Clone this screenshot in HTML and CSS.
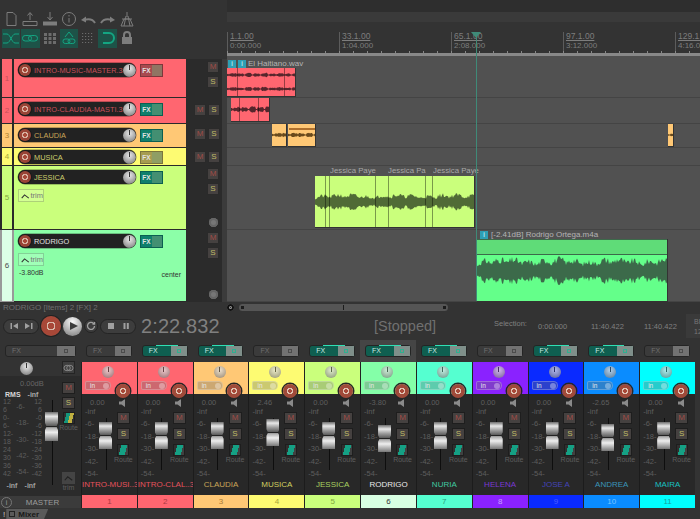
FILE: index.html
```html
<!DOCTYPE html>
<html lang="en">
  <head>
    <meta charset="UTF-8" />
    <title>Mixer session</title>
    <link rel="stylesheet" href="styles.css">
  </head>
  <body>
    <div class="app">
      <!-- toolbar + ruler -->
      <div class="top">
        <div class="toolbar">
          <div class="tool"><svg viewBox="0 0 18 18"><path d="M5 2.500h6l3 3v10H5z"/></svg></div>
          <div class="tool"><svg viewBox="0 0 18 18"><path d="M9 10V3M6.500 5.500L9 2.500l2.500 3M2 11.500h14v4H2z"/></svg></div>
          <div class="tool"><svg viewBox="0 0 18 18"><path d="M9 2v7M6.500 7L9 10l2.500-3"/><path class="fill" d="M2 11.500h14v4H2z"/></svg></div>
          <div class="tool"><svg viewBox="0 0 18 18"><circle cx="9" cy="9" r="6.500"/><path d="M9 8v4.500M9 5v1.500"/></svg></div>
          <div class="tool"><svg viewBox="0 0 18 18"><path class="thick" d="M16 13c-2-3.500-6-4.500-11-3"/><path class="fill" d="M2 10l5-3.500v6z"/></svg></div>
          <div class="tool"><svg viewBox="0 0 18 18"><path class="thick" d="M2 13c2-3.500 6-4.500 11-3"/><path class="fill" d="M16 10l-5-3.500v6z"/></svg></div>
          <div class="tool"><svg viewBox="0 0 18 18"><path d="M9 2v3M6 16l2-10h2l2 10M3 16l3-7h6l3 7zM4 9h10"/></svg></div>

          <div class="tool on"><svg viewBox="0 0 18 18"><path d="M1 5h4c3 0 5 9 8 9h4M1 14h4c3 0 5-9 8-9h4"/></svg></div>
          <div class="tool on"><svg viewBox="0 0 18 18"><rect x="1.500" y="6.500" width="9" height="5.500" rx="2.700"/><rect x="7.500" y="6.500" width="9" height="5.500" rx="2.700"/></svg></div>
          <div class="tool"><svg viewBox="0 0 18 18"><path class="blocks" d="M3 4h3v3H3zM7.500 4h3v3h-3zM12 4h3v3h-3zM3 8h3v3H3zM7.500 8h3v3h-3zM12 8h3v3h-3zM3 12h3v3H3zM7.500 12h3v3h-3zM12 12h3v3h-3z"/></svg></div>
          <div class="tool on"><svg viewBox="0 0 18 18"><path d="M5 8l4-5 4 5"/><rect x="3" y="10" width="7" height="4.500" rx="2.200"/><rect x="8" y="10" width="7" height="4.500" rx="2.200"/></svg></div>
          <div class="tool"><svg viewBox="0 0 18 18"><path class="dots" d="M3 4.500h12M3 7.500h12M3 10.500h12M3 13.500h12"/></svg></div>
          <div class="tool on"><svg viewBox="0 0 18 18"><path class="thick" d="M4 4h6a5 5 0 0 1 0 10H4"/></svg></div>
          <div class="tool"><svg viewBox="0 0 18 18"><path class="thick" d="M6 8V6a3 3 0 0 1 6 0v2"/><path class="fill" d="M4 8h10v7H4z"/></svg></div>
        </div>
        <div class="timeline">
          <div class="timeline-band"></div>
          <div class="ruler">
            <div class="mark"><u>1.1.00</u><span>0:00.000</span></div>
            <div class="mark"><u>33.1.00</u><span>1:04.000</span></div>
            <div class="mark"><u>65.1.00</u><span>2:08.000</span></div>
            <div class="mark"><u>97.1.00</u><span>3:12.000</span></div>
            <div class="mark"><u>129.1.00</u><span>4:16.000</span></div>
          </div>
          <div class="ticks"></div>
        </div>
      </div>

      <!-- tracks -->
      <div class="tracks">
        <div class="track t-1 first">
          <div class="num"><b>1</b></div>
          <div class="tcp">
            <div class="tcp-line">
              <div class="name-pill"><i class="rec"></i><span>INTRO-MUSIC-MASTER.3</span><i class="knob"></i></div>
              <div class="fx-mini off"><b>FX</b><i></i></div>
            </div>
          </div>
          <div class="ms stacked"><i class="m">M</i><i class="s">S</i></div>
          <div class="lane">
            <div class="take-label label-haitiano"><i class="badge">i</i><i class="badge">i</i><span>El Haitiano.wav</span></div>
            <div class="clip red clip-haitiano" data-cuts="10,57">
              <svg class="wave half" data-seed="3" data-amp="0.36" data-gaps="1"></svg>
              <svg class="wave half" data-seed="8" data-amp="0.36" data-gaps="1"></svg>
            </div>
          </div>
        </div>
        <div class="track t-2">
          <div class="num"><b>2</b></div>
          <div class="tcp">
            <div class="tcp-line">
              <div class="name-pill"><i class="rec"></i><span>INTRO-CLAUDIA-MASTI.3</span><i class="knob"></i></div>
              <div class="fx-mini"><b>FX</b><i></i></div>
            </div>
          </div>
          <div class="ms"><i class="m">M</i><i class="s">S</i></div>
          <div class="lane">
            <div class="clip red clip-claudia-a" data-cuts="8,27">
              <svg class="wave" data-seed="5" data-amp="0.3" data-gaps="1"></svg>
            </div>
          </div>
        </div>
        <div class="track t-3">
          <div class="num"><b>3</b></div>
          <div class="tcp">
            <div class="tcp-line">
              <div class="name-pill"><i class="rec"></i><span>CLAUDIA</span><i class="knob"></i></div>
              <div class="fx-mini"><b>FX</b><i></i></div>
            </div>
          </div>
          <div class="ms"><i class="m">M</i><i class="s">S</i></div>
          <div class="lane">
            <div class="clip orange clip-claudia-b"><svg class="wave" data-seed="11" data-amp="0.26" data-gaps="1"></svg></div>
            <div class="clip orange lined clip-claudia-c"><svg class="wave" data-seed="14" data-amp="0.26" data-gaps="1"></svg></div>
            <div class="clip orange clip-claudia-d"><svg class="wave" data-seed="17" data-amp="0.2" data-gaps="1"></svg></div>
          </div>
        </div>
        <div class="track t-4">
          <div class="num"><b>4</b></div>
          <div class="tcp">
            <div class="tcp-line">
              <div class="name-pill"><i class="rec"></i><span>MUSICA</span><i class="knob"></i></div>
              <div class="fx-mini off"><b>FX</b><i></i></div>
            </div>
          </div>
          <div class="ms"><i class="m">M</i><i class="s">S</i></div>
          <div class="lane"></div>
        </div>
        <div class="track t-5">
          <div class="num"><b>5</b></div>
          <div class="tcp">
            <div class="tcp-line">
              <div class="name-pill"><i class="rec"></i><span>JESSICA</span><i class="knob"></i></div>
              <div class="fx-mini"><b>FX</b><i></i></div>
            </div>
            <div class="trim"><svg viewBox="0 0 12 8"><path d="M1 7l4-4.500L11 7"/></svg>trim</div>
          </div>
          <div class="ms stacked"><i class="m">M</i><i class="s">S</i><em class="phase"></em></div>
          <div class="lane">
            <span class="take-name jp-a">Jessica Paye</span>
            <span class="take-name jp-b">Jessica Pa</span>
            <span class="take-name jp-c">Jessica Paye</span>
            <div class="clip lime clip-jessica" data-cuts="10,14,60,73,110,117">
              <svg class="wave tall" data-seed="21" data-amp="0.62"></svg>
            </div>
          </div>
        </div>
        <div class="track t-6">
          <div class="num"><b>6</b></div>
          <div class="tcp">
            <div class="tcp-line">
              <div class="name-pill"><i class="rec"></i><span>RODRIGO</span><i class="knob"></i></div>
              <div class="fx-mini"><b>FX</b><i></i></div>
            </div>
            <div class="trim"><svg viewBox="0 0 12 8"><path d="M1 7l4-4.500L11 7"/></svg>trim</div>
            <div class="tcp-foot"><span>-3.80dB</span><span>center</span></div>
          </div>
          <div class="ms stacked"><i class="m">M</i><i class="s">S</i><em class="phase"></em></div>
          <div class="lane">
            <div class="take-label label-rodrigo"><i class="badge">i</i><span>[-2.41dB] Rodrigo Ortega.m4a</span></div>
            <div class="clip mint clip-rodrigo">
              <div class="clip-band"></div>
              <svg class="wave full" data-seed="31" data-amp="0.95"></svg>
            </div>
          </div>
        </div>
      </div>

      <div class="playhead"></div>

      <!-- transport -->
      <div class="transport">
        <div class="status">
          <span class="status-text">RODRIGO [Items] 2 [FX] 2</span>
          <i class="scroll-dot"></i>
          <div class="hscroll"><i></i><i class="mid"></i><i></i></div>
        </div>
        <div class="controls">
          <div class="pill">
            <svg viewBox="0 0 10 10"><path d="M1.500 2h1.500v6H1.500zM9 2v6L4 5z"/></svg>
            <svg viewBox="0 0 10 10"><path d="M1 2v6l5-3zM7 2h1.500v6H7z"/></svg>
          </div>
          <div class="t-rec"></div>
          <div class="t-play"></div>
          <div class="t-loop"><svg viewBox="0 0 10 10"><path d="M8.500 5a3.500 3.500 0 1 1-1-2.500M8.500 1v2h-2"/></svg></div>
          <div class="pill">
            <svg viewBox="0 0 10 10"><path d="M2 2h6v6H2z"/></svg>
            <svg viewBox="0 0 10 10"><path d="M2.500 2h2v6h-2zM5.800 2h2v6h-2z"/></svg>
          </div>
          <div class="clock">2:22.832</div>
          <div class="state">[Stopped]</div>
          <div class="sel">
            <span>Selection:</span><span>0:00.000</span><span>11:40.422</span><span>11:40.422</span>
          </div>
          <div class="bpm"><span>BPM</span><span>120</span></div>
        </div>
      </div>

      <!-- mixer -->
      <div class="mixer">
        <div class="master">
          <div class="fx-slot off"><b>FX</b><i></i></div>
          <div class="master-head">
            <i class="knob big"></i>
            <div class="link-btn"><svg viewBox="0 0 12 8"><ellipse cx="4.500" cy="4" rx="3.500" ry="3"/><ellipse cx="7.500" cy="4" rx="3.500" ry="3"/></svg></div>
          </div>
          <div class="master-body">
            <div class="meter">
              <div class="meter-db">0.00dB</div>
              <div class="meter-top"><b>RMS</b><b class="dim">-inf</b></div>
              <div class="meter-scale">
                <div class="scale-col"><span>12</span><span>6</span><span>0-</span><span>6-</span><span>12-</span><span>18</span><span>24</span><span>30</span><span>36</span><span>42</span></div>
                <div class="scale-col mid"><span>-6-</span><span>-18-</span><span>-30-</span><span>-42-</span><span>-54-</span></div>
                <div class="scale-col"><span>12</span><span>6</span><span>-0</span><span>-6</span><span>-12</span><span>-18</span><span>-24</span><span>-30</span><span>-36</span><span>-42</span></div>
              </div>
              <div class="meter-foot"><b>-inf</b><b>-inf</b></div>
            </div>
            <div class="fader-col master-fader"><div class="fader"></div></div>
            <div class="btn-col">
              <i class="mbtn m">M</i>
              <i class="mbtn s">S</i>
              <i class="route r-master"></i>
              <span class="route-text">Route</span>
              <i class="trim-btn"><svg viewBox="0 0 12 8"><path d="M1 7l4-4.500L11 7"/></svg></i>
              <span class="route-text">trim</span>
            </div>
          </div>
          <div class="master-foot"><i class="info">i</i><span>MASTER</span></div>
        </div>
        <div class="strips" id="strips"></div>
      </div>

      <div class="tabs">
        <span class="bang">!</span>
        <div class="tab"><i></i>Mixer</div>
      </div>
    </div>
    <script src="script.js"></script>
  </body>
</html>
```

FILE: styles.css
```css
* {
  box-sizing: border-box;
}

body {
  margin: 0;
  background-color: #333333;
  font-family: "Liberation Sans", Arial, sans-serif;
  font-size: 8px;
  color: #888888;
}

i,
em {
  font-style: normal;
}

.app {
  position: relative;
  width: 700px;
  height: 519px;
  overflow: hidden;
  display: flex;
  flex-direction: column;
}

/* toolbar + ruler */
.top {
  display: flex;
  height: 56px;
  flex: none;
  background-color: #333333;
}

.toolbar {
  width: 227px;
  flex: none;
  padding: 9px 0 0 1.500px;
  display: grid;
  grid-template-columns: repeat(7, 19.400px);
  grid-auto-rows: 19.500px;
}

.tool {
  display: flex;
  align-items: center;
  justify-content: center;
  margin-right: 0.600px;
}

.tool svg {
  width: 18px;
  height: 18px;
  fill: none;
  stroke: #7d7d7d;
  stroke-width: 1;
}

.tool .fill {
  fill: #7d7d7d;
  stroke: none;
}

.tool .thick {
  stroke-width: 2;
}

.tool .blocks {
  fill: #6c6c6c;
  stroke: none;
}

.tool .dots {
  stroke: #6c6c6c;
  stroke-width: 1.200;
  stroke-dasharray: 1.200 1.800;
}

.tool.on {
  background-color: #1d5348;
}

.tool.on svg {
  stroke: #14a582;
}

.timeline {
  flex: 1;
  min-width: 0;
  overflow: hidden;
  display: flex;
  flex-direction: column;
  background: linear-gradient(#2e2e2e 12px, #333333 12px);
}

.timeline-band {
  height: 10px;
  flex: none;
  margin-top: 12px;
  background-color: #3a3a3a;
}

.ruler {
  height: 19px;
  flex: none;
  margin-top: 10px;
  display: grid;
  grid-template-columns: repeat(5, 112px);
}

.mark {
  border-left: 1px solid #5c5c5c;
  padding-left: 2px;
  display: flex;
  flex-direction: column;
  align-items: flex-start;
  font-size: 8px;
  line-height: 9px;
  color: #7d7d7d;
  white-space: nowrap;
}

.mark u {
  font-size: 8.500px;
}

.ticks {
  height: 5px;
  flex: none;
  background:
    linear-gradient(transparent 2px, #888888 2px),
    repeating-linear-gradient(90deg, #888888 0 1px, transparent 1px 14px);
  background-color: #333333;
}

/* tracks */
.tracks {
  height: 246px;
  flex: none;
  display: flex;
  flex-direction: column;
}

.track {
  display: flex;
  --tc: #ff6670;
  --tt: #c8505a;
}

.t-1 { height: 42px; }
.t-2 { height: 26px; }
.t-3 { height: 24px; --tc: #ffc875; --tt: #b08232; }
.t-4 { height: 18px; --tc: #fdfb72; --tt: #a8a83a; }
.t-5 { height: 64px; --tc: #caff7c; --tt: #7fa83e; }
.t-6 { height: 72px; --tc: #8cffa8; --tt: #4a4a4a; }

.num {
  width: 14px;
  flex: none;
  padding: 0 2px 1px 2px;
  background-color: #2a2a2a;
  display: flex;
}

.num b {
  flex: 1;
  background-color: var(--tc);
  color: var(--tt);
  font-size: 8px;
  font-weight: normal;
  display: flex;
  align-items: center;
  justify-content: center;
}

.first .num,
.first .tcp,
.first .ms {
  margin-top: 3px;
}

.t-6 .num {
  background-color: #999999;
}

.t-6 .num b {
  background-color: #dcffe6;
}

.tcp {
  width: 172px;
  flex: none;
  background-color: var(--tc);
  border-bottom: 1px solid #2a2a2a;
  padding: 4px 0 0 4px;
}

.t-4 .tcp {
  padding-top: 2px;
}

.tcp-line {
  display: flex;
  align-items: center;
  gap: 4px;
}

.name-pill {
  width: 118px;
  height: 14px;
  flex: none;
  border-radius: 7px;
  background-color: #222222;
  box-shadow: 0 0 0 0.500px rgba(0, 0, 0, 0.5);
  display: flex;
  align-items: center;
  padding-left: 1px;
  color: var(--tt);
  font-size: 7.400px;
  white-space: nowrap;
  overflow: hidden;
}

.name-pill span {
  flex: 1;
  padding-left: 3px;
}

.t-3 .name-pill span {
  color: #c8a458;
}

.t-4 .name-pill span,
.t-5 .name-pill span {
  color: #cfcf6e;
}

.t-6 .name-pill span {
  color: #e0e0e0;
}

.rec {
  width: 12px;
  height: 12px;
  flex: none;
  border-radius: 50%;
  background: radial-gradient(circle, #a84838 0 2px, #d8b0a0 2px 3.200px, #9a4436 3.200px);
  box-shadow: 0 0 0 1px #1a1a1a;
}

.knob {
  display: block;
  width: 13px;
  height: 13px;
  flex: none;
  border-radius: 50%;
  background:
    linear-gradient(#333 0 0) center 1px / 1px 5px no-repeat,
    radial-gradient(circle at 50% 35%, #e8e8e8, #8e8e8e 75%);
}

.fx-mini {
  width: 23px;
  height: 13px;
  display: flex;
  border: 1px solid rgba(0, 0, 0, 0.25);
  background-color: #0f7f6c;
}

.fx-mini b {
  flex: 1;
  color: #e2e2e2;
  font-size: 6.500px;
  line-height: 11px;
  text-align: center;
}

.fx-mini i {
  width: 10px;
  background-color: rgba(120, 160, 120, 0.5);
}

.fx-mini.off {
  background-color: rgba(60, 40, 40, 0.45);
}

.trim {
  width: 26px;
  height: 13px;
  margin-top: 5px;
  border: 1px solid rgba(0, 0, 0, 0.18);
  background-color: rgba(255, 255, 255, 0.18);
  display: flex;
  align-items: center;
  gap: 1px;
  padding-left: 2px;
  color: #777;
  font-size: 7.500px;
}

.trim svg {
  width: 9px;
  height: 6px;
  fill: none;
  stroke: #333;
  stroke-width: 1.500;
}

.tcp-foot {
  display: flex;
  justify-content: space-between;
  margin: 3px 5px 0 1px;
  color: #333333;
  font-size: 7px;
}

.tcp-foot span + span {
  margin-top: 2px;
}

.ms {
  width: 41px;
  flex: none;
  background-color: #2b2b2b;
  border-right: 5px solid #3b3b3b;
  padding: 6px 3px 0 8px;
  display: flex;
  gap: 2px;
}

.t-3 .ms {
  padding-top: 4px;
}

.t-4 .ms {
  padding-top: 3px;
}

.ms i {
  width: 12px;
  height: 12px;
  flex: none;
  background-color: #454140;
  box-shadow: inset 0 0 0 1px #2a2a2a;
  font-size: 8px;
  line-height: 12px;
  text-align: center;
}

.mbtn {
  width: 13px;
  height: 12px;
  flex: none;
  background-color: #454140;
  box-shadow: inset 0 0 0 1px #1e1e1e;
  font-size: 8px;
  line-height: 12px;
  text-align: center;
}

.ms .m,
.mbtn.m {
  color: #a04c46;
}

.ms .s,
.mbtn.s {
  color: #c0bc68;
}

.ms.stacked {
  flex-direction: column;
  align-items: flex-end;
  padding-top: 2px;
  padding-right: 3px;
  gap: 3px;
}

.phase {
  width: 9px;
  height: 9px;
  margin: auto 1px 3px 0;
  border-radius: 50%;
  background-color: #777777;
  box-shadow: inset 0 0 0 2px #666;
}

.lane {
  flex: 1;
  position: relative;
  background-color: #515151;
  border-bottom: 1px solid #444444;
}

/* clips sit on the timeline at their own time */
.clip {
  position: absolute;
  display: flex;
  flex-direction: column;
  justify-content: center;
  border-right: 1px solid #333;
  border-bottom: 1px solid #333;
}

.clip.red { background-color: #ff6670; color: #56262c; }
.clip.orange { background-color: #ffc875; color: #6a4a1c; }
.clip.lime { background-color: #caff7c; color: #506b36; }
.clip.mint { background-color: #64ff8a; color: #3c6a4a; }

.clip-haitiano { left: 0; top: 12px; width: 69px; height: 29px; }
.clip-claudia-a { left: 4px; top: 0; width: 39px; height: 24px; }
.clip-claudia-b { left: 45px; top: 0; width: 15px; height: 23px; }
.clip-claudia-c { left: 61px; top: 0; width: 28px; height: 23px; }
.clip-claudia-d { left: 441px; top: 0; width: 6px; height: 23px; }
.clip-jessica { left: 88px; top: 10px; width: 160px; height: 52px; }
.clip-rodrigo { left: 250px; top: 9px; width: 191px; height: 63px; justify-content: flex-start; }

.clip.lined::before {
  content: "";
  position: absolute;
  left: 1px;
  right: 0;
  top: 4px;
  height: 1.500px;
  background-color: #b0702c;
}

.clip-band {
  height: 16px;
  flex: none;
  background-color: #5fdc78;
  border-bottom: 1px solid #3c6a4a;
  border-top: 1px solid #3c6a4a;
}

.cut {
  position: absolute;
  top: 0;
  bottom: 0;
  width: 1px;
  background-color: rgba(0, 0, 0, 0.4);
}

.wave {
  display: block;
  width: 100%;
  height: 100%;
  fill: currentColor;
}

.wave.half {
  height: 50%;
}

.wave.tall {
  height: 30px;
}

.wave.full {
  flex: none;
  height: 32px;
}

.take-label {
  position: absolute;
  display: flex;
  align-items: center;
  gap: 2px;
  color: #b4b4b4;
  font-size: 8px;
  white-space: nowrap;
}

.label-haitiano { left: 1px; top: 3px; }
.label-rodrigo { left: 253px; top: 0; }

.badge {
  width: 8px;
  height: 8px;
  background-color: #2e9fb4;
  color: #dff;
  font-size: 7px;
  line-height: 8px;
  text-align: center;
}

.label-rodrigo .badge {
  margin-right: 1px;
}

.take-name {
  position: absolute;
  top: 0;
  color: #a8a8a8;
  font-size: 7.800px;
  line-height: 9px;
  white-space: nowrap;
  overflow: hidden;
}

.jp-a { left: 103px; }
.jp-b { left: 161px; }
.jp-c { left: 206px; }

.playhead {
  position: absolute;
  left: 476px;
  top: 34px;
  width: 1px;
  height: 267px;
  background-color: #3f8a78;
}

.playhead::before {
  content: "";
  position: absolute;
  left: -5px;
  top: -2px;
  border-left: 5px solid transparent;
  border-right: 5px solid transparent;
  border-top: 6px solid #3f8a78;
}

/* transport */
.transport {
  height: 38px;
  flex: none;
  background-color: #333333;
}

.status {
  height: 11px;
  display: flex;
  align-items: center;
}

.status-text {
  width: 227px;
  padding-left: 3px;
  color: #6f6f6f;
  font-size: 8px;
  white-space: nowrap;
}

.scroll-dot {
  width: 7px;
  height: 7px;
  border-radius: 50%;
  background-color: #111111;
  box-shadow: inset 0 0 0 2px #111, inset 0 0 0 3px #999;
}

.hscroll {
  width: 209px;
  height: 7px;
  margin-left: 5px;
  border-radius: 4px;
  background-color: #555555;
  display: flex;
  align-items: center;
  justify-content: space-between;
  padding: 0 2px;
}

.hscroll i {
  width: 3px;
  height: 3px;
  background-color: #1c1c1c;
}

.hscroll .mid {
  width: 1px;
  height: 5px;
}

.controls {
  display: flex;
  align-items: center;
  gap: 2px;
  height: 27px;
  padding: 0 0 1px 3px;
  white-space: nowrap;
}

.pill {
  width: 36px;
  height: 15px;
  flex: none;
  border-radius: 8px;
  border: 1px solid #242424;
  background-color: #3d3d3d;
  display: flex;
  align-items: center;
  justify-content: space-around;
  padding: 0 2px;
}

.pill svg {
  width: 10px;
  height: 10px;
  fill: #a0a0a0;
}

.t-rec {
  width: 20px;
  height: 20px;
  flex: none;
  border-radius: 50%;
  background: radial-gradient(circle, #a84838 0 3px, #d8b8a8 3px 4.500px, #a84838 4.500px);
  box-shadow: 0 0 0 1px #222;
}

.t-play {
  width: 19px;
  height: 19px;
  flex: none;
  border-radius: 50%;
  background: radial-gradient(circle at 50% 25%, #fafafa, #8a8a8a 85%);
  display: flex;
  align-items: center;
  justify-content: center;
}

.t-play::before {
  content: "";
  margin-left: 2px;
  border-left: 8px solid #3c3c3c;
  border-top: 4.500px solid transparent;
  border-bottom: 4.500px solid transparent;
}

.t-loop {
  width: 14px;
  height: 14px;
  flex: none;
  border-radius: 50%;
  border: 1px solid #242424;
  background-color: #3d3d3d;
  display: flex;
  align-items: center;
  justify-content: center;
}

.t-loop svg {
  width: 10px;
  height: 10px;
  fill: none;
  stroke: #a0a0a0;
  stroke-width: 1.300;
}

.clock {
  margin-left: 3px;
  width: 100px;
  flex: none;
  color: #808080;
  font-size: 20px;
  letter-spacing: 0.100px;
}

.state {
  width: 118px;
  margin-left: 131px;
  flex: none;
  color: #707070;
  font-size: 14.500px;
}

.sel {
  display: flex;
  flex: none;
  color: #808080;
  font-size: 7.500px;
}

.sel span {
  width: 53px;
  flex: none;
}

.sel span:first-child {
  width: 44px;
  margin-top: -3px;
}

.bpm {
  width: 30px;
  height: 24px;
  flex: none;
  margin-left: -13px;
  background-color: #3a3a3a;
  display: flex;
  flex-direction: column;
  padding: 3px 0 0 8px;
  color: #777;
  font-size: 7px;
  line-height: 10px;
}

/* mixer */
.mixer {
  height: 168px;
  flex: none;
  display: flex;
}

.master {
  width: 81px;
  flex: none;
  display: flex;
  flex-direction: column;
}

.fx-slot {
  height: 12px;
  flex: none;
  margin: 5px;
  border-radius: 3px;
  border: 1px solid #242424;
  background-color: #0f5f50;
  display: flex;
  position: relative;
}

.fx-slot b {
  flex: 1;
  padding-left: 6px;
  color: #c8e8e0;
  font-size: 7px;
  line-height: 10px;
  font-weight: normal;
}

.fx-slot i {
  width: 16px;
  background:
    radial-gradient(circle, transparent 1.500px, #2fb090 1.500px 2.500px, transparent 2.500px),
    #7f8f8a;
}

.fx-slot::after {
  content: "";
  position: absolute;
  top: -1px;
  left: 30%;
  width: 50%;
  height: 1px;
  background-color: #2fe0b4;
}

.fx-slot.off {
  background-color: #3b3b3b;
}

.fx-slot.off b {
  color: #6e6e6e;
}

.fx-slot.off i {
  background:
    radial-gradient(circle, transparent 1.500px, #4c4c4c 1.500px 2.500px, transparent 2.500px),
    #727272;
}

.fx-slot.off::after {
  display: none;
}

.master .fx-slot i {
  width: 18px;
}

.master-head {
  height: 14px;
  flex: none;
  display: flex;
  align-items: flex-start;
  justify-content: space-between;
  padding: 0 6px 0 20px;
}

.knob.big {
  width: 13px;
  height: 13px;
}

.link-btn {
  width: 13px;
  height: 13px;
  margin-top: -1px;
  background-color: #3f3f3f;
  border: 1px solid #242424;
  display: flex;
  align-items: center;
  justify-content: center;
}

.link-btn svg {
  width: 11px;
  height: 8px;
  fill: none;
  stroke: #8a8a8a;
}

.master-body {
  flex: 1;
  min-height: 0;
  background-color: #2b2b2b;
  display: flex;
  padding-top: 3px;
}

.meter {
  width: 45px;
  flex: none;
  padding-left: 3px;
}

.meter-db {
  padding-left: 17px;
  color: #666;
  font-size: 7.500px;
  line-height: 9px;
}

.meter-top {
  margin-top: 3px;
  padding-left: 2px;
  display: flex;
  gap: 7px;
  color: #d8d8d8;
  font-size: 7px;
  line-height: 8px;
}

.meter-top .dim {
  color: #aaa;
}

.meter-scale {
  display: flex;
  justify-content: space-between;
  margin-top: -1px;
  height: 80px;
  color: #5e5e5e;
  font-size: 7px;
  line-height: 8px;
  padding-right: 3px;
}

.scale-col {
  display: flex;
  flex-direction: column;
  justify-content: space-between;
}

.scale-col.mid {
  padding: 5px 0 2px 0;
}

.scale-col:last-child {
  align-items: flex-end;
}

.meter-foot {
  display: flex;
  justify-content: space-around;
  margin-top: 4px;
  color: #a0a0a0;
  font-size: 7px;
  line-height: 8px;
  padding-right: 6px;
}

.fader-col {
  width: 14px;
  flex: none;
  background: linear-gradient(#0e0e0e 0 0) center / 1px 100% no-repeat;
}

.master-fader {
  margin-top: 21px;
  height: 85px;
  padding-top: 12px;
}

.fader {
  width: 13px;
  height: 27px;
  background: linear-gradient(#6e6e6e, #e8e8e8 15%, #9a9a9a 32%, #5a5a5a 48%, #222 50%, #aaa 54%, #eee 70%, #777 100%);
  clip-path: polygon(0 0, 100% 0, 100% 38%, 88% 50%, 100% 62%, 100% 100%, 0 100%, 0 62%, 12% 50%, 0 38%);
}

.master-fader .fader {
  height: 29px;
}

.btn-col {
  flex: 1;
  display: flex;
  flex-direction: column;
  align-items: center;
  gap: 3px;
  padding: 3px 3px 0 0;
}

.route {
  width: 12px;
  height: 12px;
  flex: none;
  background: linear-gradient(105deg, #2f2f2f 30%, #15a084 30% 70%, #404040 70%);
  box-shadow: inset 0 0 0 1px #1e1e1e;
}

.route.r-master {
  background: linear-gradient(105deg, #2f2f2f 25%, #15967c 25% 50%, #c0b040 50% 75%, #2f2f2f 75%);
}

.route-text {
  margin-top: -3px;
  color: #5e5e5e;
  font-size: 7px;
  line-height: 8px;
}

.trim-btn {
  width: 13px;
  height: 12px;
  flex: none;
  margin-top: 37px;
  background-color: #444;
  display: flex;
  align-items: center;
  justify-content: center;
}

.trim-btn svg {
  width: 9px;
  height: 6px;
  fill: none;
  stroke: #222;
  stroke-width: 1.500;
}

.master-foot {
  height: 12px;
  flex: none;
  background-color: #3b3b3b;
  display: flex;
  align-items: center;
  color: #9c9c9c;
  font-size: 8px;
}

.master-foot span {
  flex: 1;
  text-align: center;
  margin-right: 8px;
}

.info {
  width: 11px;
  height: 11px;
  margin-left: 1px;
  border: 1px solid #777;
  border-radius: 50%;
  font-size: 7px;
  line-height: 9px;
  text-align: center;
}

.strips {
  width: 614px;
  flex: none;
  display: grid;
  grid-template-columns: repeat(11, minmax(0, 1fr));
}

.strip {
  min-width: 0;
  display: flex;
  flex-direction: column;
}

.strip.selected .fx-wrap {
  background-color: #454545;
}

.fx-wrap {
  height: 22px;
  flex: none;
  display: flex;
}

.fx-wrap .fx-slot {
  flex: 1;
}

.head {
  position: relative;
  height: 32px;
  flex: none;
  background-color: var(--c);
  border-left: 1px solid #222;
  padding: 4px 0 0 20px;
}

.head .knob {
  width: 12px;
  height: 12px;
  opacity: 0.75;
}

.in-pill {
  position: absolute;
  left: 3px;
  bottom: 4px;
  width: 26px;
  height: 9px;
  border-radius: 2px 5px 5px 2px;
  border: 1px solid rgba(255, 255, 255, 0.25);
  background-color: rgba(110, 110, 110, 0.35);
  color: #e8e8e8;
  font-size: 6.500px;
  line-height: 7px;
  padding-left: 4px;
}

.in-pill::after {
  content: "";
  position: absolute;
  right: 1px;
  top: 0.500px;
  width: 6px;
  height: 6px;
  border-radius: 50%;
  background-color: rgba(255, 255, 255, 0.35);
}

.head .rec {
  position: absolute;
  right: 7px;
  bottom: -4px;
  width: 14px;
  height: 14px;
  background: radial-gradient(circle, #a84838 0 2px, #e0c4b4 2px 3.500px, #a04a3a 3.500px);
  box-shadow: 0 0 0 1.500px #262626;
}

.body {
  flex: 1;
  min-height: 0;
  background-color: #282828;
  border-left: 1px solid #1c1c1c;
  display: flex;
  flex-direction: column;
}

.body-main {
  height: 82px;
  flex: none;
  display: flex;
  padding-top: 4px;
}

.scale {
  width: 17px;
  flex: none;
  display: flex;
  flex-direction: column;
  padding: 0 0 0 3px;
  color: #5e5e5e;
  font-size: 7.500px;
  line-height: 9px;
}

.scale b {
  height: 12.400px;
  font-weight: normal;
  flex: none;
}

.scale b:first-child {
  height: 9px;
}

.gain {
  display: block;
  height: 10px;
  color: #5e5e5e;
  white-space: nowrap;
  width: 32px;
  padding-left: 5px;
}

.strip .fader-col {
  margin-top: 20px;
  height: 52px;
}

.strip .fader {
  margin-top: var(--y);
}

.strip .btn-col {
  padding: 0 3px 0 0;
  gap: 4px;
}

.spk {
  width: 10px;
  height: 10px;
  flex: none;
  fill: #8a8a8a;
}

.strip .route-text {
  margin-top: -4px;
}

.strip-name {
  height: 19px;
  flex: none;
  text-align: center;
  color: var(--n);
  font-size: 8px;
  line-height: 18px;
  white-space: nowrap;
}

.strip-num {
  height: 13px;
  flex: none;
  background-color: var(--c);
  border-left: 1px solid #222;
  color: var(--nn);
  font-size: 8px;
  line-height: 13px;
  text-align: center;
}

.strip.selected .strip-num {
  background-color: #d8ffe2;
}

/* tabs */
.tabs {
  flex: 1;
  display: flex;
  align-items: flex-end;
  gap: 1px;
  padding-left: 3px;
  background-color: #333333;
}

.bang {
  color: #ccc;
  font-size: 8px;
  line-height: 9px;
}

.tab {
  width: 42px;
  height: 10px;
  background-color: #5a5a5a;
  clip-path: polygon(0 0, 100% 0, 90% 100%, 0 100%);
  display: flex;
  align-items: center;
  gap: 3px;
  padding-left: 3px;
  color: #181818;
  font-size: 8px;
  font-weight: bold;
}

.tab i {
  width: 6px;
  height: 6px;
  border: 1px solid #222;
}
```

FILE: script.js
```js
// mixer channels, values read off the session
var channels = [
  { name: "INTRO-MUSI..3", color: "#ff6670", text: "#e4525c", num: "#a83a42", gain: "0.00", y: 0, fx: false },
  { name: "INTRO-CLAL..3", color: "#ff6670", text: "#e4525c", num: "#a83a42", gain: "0.00", y: 0, fx: true },
  { name: "CLAUDIA", color: "#ffc875", text: "#c8a458", num: "#a87c38", gain: "0.00", y: 0, fx: true },
  { name: "MUSICA", color: "#fdfb72", text: "#d0d060", num: "#a8a83a", gain: "2.46", y: -3, fx: false },
  { name: "JESSICA", color: "#caff7c", text: "#a8d060", num: "#7fa83e", gain: "0.00", y: 0, fx: true },
  { name: "RODRIGO", color: "#84ffa8", text: "#e8e8e8", num: "#333333", gain: "-3.80", y: 3, fx: true, selected: true },
  { name: "NURIA", color: "#55ffd0", text: "#40c8a0", num: "#2a9c7c", gain: "0.00", y: 0, fx: true },
  { name: "HELENA", color: "#8a22ff", text: "#7a38d0", num: "#c8a0ff", gain: "0.00", y: 0, fx: false },
  { name: "JOSE A", color: "#0a2aff", text: "#4444b8", num: "#4a5cff", gain: "0.00", y: 0, fx: true },
  { name: "ANDREA", color: "#0a8cff", text: "#3a94b8", num: "#7cc4ff", gain: "-2.65", y: 2, fx: true },
  { name: "MAIRA", color: "#00ffff", text: "#18c0c0", num: "#18a0a0", gain: "0.00", y: 0, fx: false }
];

var dbLabels = ["-inf", "-6-", "-18-", "-30-", "-42-", "-54-"];

function stripHtml(ch, i) {
  var scale = dbLabels.map(function (d) { return "<b>" + d + "</b>"; }).join("");
  return (
    '<div class="strip' + (ch.selected ? " selected" : "") + '" style="--c:' + ch.color + ";--n:" + ch.text + ";--nn:" + ch.num + ";--y:" + (4 + ch.y) + 'px">' +
      '<div class="fx-wrap"><div class="fx-slot' + (ch.fx ? "" : " off") + '"><b>FX</b><i></i></div></div>' +
      '<div class="head"><i class="knob"></i><div class="in-pill">in</div><i class="rec"></i></div>' +
      '<div class="body">' +
        '<div class="body-main">' +
          '<div class="scale"><span class="gain">' + ch.gain + "</span>" + scale + "</div>" +
          '<div class="fader-col"><div class="fader"></div></div>' +
          '<div class="btn-col">' +
            '<svg class="spk" viewBox="0 0 10 10"><path d="M1 3.500h2.500L7 1v8L3.500 6.500H1z"/></svg>' +
            '<i class="mbtn m">M</i><i class="mbtn s">S</i><i class="route"></i><span class="route-text">Route</span>' +
          "</div>" +
        "</div>" +
        '<div class="strip-name">' + ch.name + "</div>" +
      "</div>" +
      '<div class="strip-num">' + (i + 1) + "</div>" +
    "</div>"
  );
}

document.getElementById("strips").innerHTML = channels.map(stripHtml).join("");

// waveforms: small seeded noise so the picture stays the same every load
function noise(seed) {
  var s = seed * 9301 + 49297;
  return function () {
    s = (s * 9301 + 49297) % 233280;
    return s / 233280;
  };
}

function drawWave(svg) {
  var box = svg.getBoundingClientRect();
  var w = Math.round(box.width);
  var h = Math.round(box.height);
  var mid = h / 2;
  var amp = parseFloat(svg.dataset.amp);
  var gaps = svg.dataset.gaps === "1";
  var rnd = noise(parseInt(svg.dataset.seed, 10));
  var top = [];
  var bottom = [];
  for (var x = 0; x <= w; x += 1) {
    var env = 0.45 + 0.3 * Math.abs(Math.sin(x * 0.21)) + 0.25 * Math.abs(Math.sin(x * 0.057));
    var a = mid * amp * env * (0.5 + 0.5 * rnd());
    if (gaps && Math.sin(x * 0.8) > 0.8) {
      a = 0.5;
    }
    top.push(x + "," + (mid - a).toFixed(1));
    bottom.unshift(x + "," + (mid + a * 0.95).toFixed(1));
  }
  svg.setAttribute("viewBox", "0 0 " + w + " " + h);
  svg.innerHTML = '<polygon points="' + top.concat(bottom).join(" ") + '"/>';
}

document.querySelectorAll(".wave").forEach(drawWave);

// item edges inside the long clips
document.querySelectorAll(".clip[data-cuts]").forEach(function (clip) {
  clip.dataset.cuts.split(",").forEach(function (x) {
    var cut = document.createElement("span");
    cut.className = "cut";
    cut.style.left = x + "px";
    clip.appendChild(cut);
  });
});
```
